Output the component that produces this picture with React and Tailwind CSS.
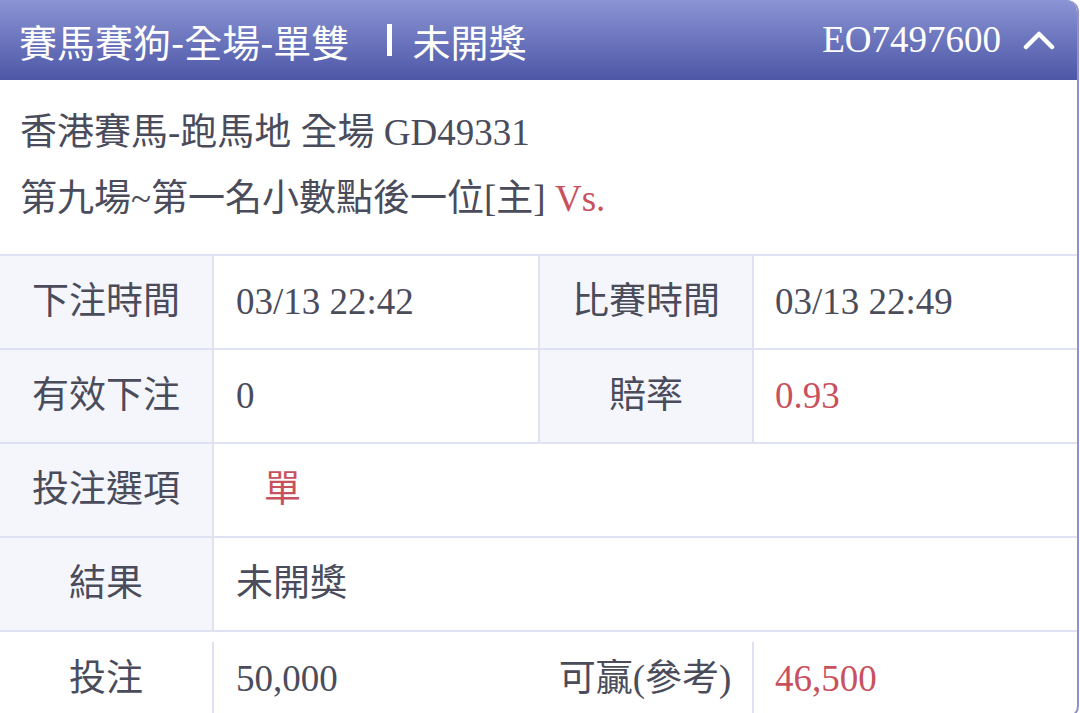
import React from "react";

const FONT = "font-['Liberation_Serif','Noto_Sans_CJK_TC',serif]";

const Row = ({ children, last }) => (
    <div className={`grid grid-cols-[212px_326px_214px_1fr] border-t-2 border-[#dfe2f3] ${last ? "h-[86px]" : "h-[94px]"}`}>
        {children}
    </div>
);

const Label = ({ children }) => (
    <div className="bg-[#f5f6fb] flex items-center justify-center">{children}</div>
);

const App = () => {
    return (
        <div className={`w-[1080px] h-[713px] overflow-hidden bg-white text-[37px] text-[#4a4c5b] ${FONT}`}>
            <div className="w-[1079px] border-r-2 border-b-2 border-[#8e92c9] rounded-tr-[12px] rounded-br-[12px] overflow-hidden">
                {/* header */}
                <div className="h-[80px] bg-gradient-to-b from-[#8b94d4] to-[#4e57a6] flex items-center pl-[19px] pr-[22px] text-white">
                    <span className="text-[38px] font-['Noto_Sans_CJK_TC',sans-serif]">賽馬賽狗-全場-單雙</span>
                    <span className="ml-[38px] w-[5px] h-[32px] bg-white" />
                    <span className="ml-[20px] text-[38px] font-['Noto_Sans_CJK_TC',sans-serif]">未開獎</span>
                    <span className="ml-auto">EO7497600</span>
                    <svg className="ml-[22px]" width="32" height="22" viewBox="0 0 32 22" fill="none">
                        <polyline points="3,18 16,5 29,18" stroke="white" strokeWidth="4.5" strokeLinecap="round" strokeLinejoin="round" />
                    </svg>
                </div>

                {/* match info */}
                <div className="pl-[20px] pt-[20px] pb-[22px] leading-[66px]">
                    <div>香港賽馬-跑馬地 全場 GD49331</div>
                    <div>第九場~第一名小數點後一位[主] <span className="text-[#c8515e]">Vs.</span></div>
                </div>

                {/* details table */}
                <Row>
                    <Label>下注時間</Label>
                    <div className="border-l-2 border-[#dfe2f3] flex items-center pl-[22px]">03/13 22:42</div>
                    <div className="border-l-2 border-[#dfe2f3] bg-[#f5f6fb] flex items-center justify-center">比賽時間</div>
                    <div className="border-l-2 border-[#dfe2f3] flex items-center pl-[21px]">03/13 22:49</div>
                </Row>
                <Row>
                    <Label>有效下注</Label>
                    <div className="border-l-2 border-[#dfe2f3] flex items-center pl-[22px]">0</div>
                    <div className="border-l-2 border-[#dfe2f3] bg-[#f5f6fb] flex items-center justify-center">賠率</div>
                    <div className="border-l-2 border-[#dfe2f3] flex items-center pl-[21px] text-[#c8515e]">0.93</div>
                </Row>
                <Row>
                    <Label>投注選項</Label>
                    <div className="col-span-3 border-l-2 border-[#dfe2f3] flex items-center pl-[50px] text-[#c8515e]">單</div>
                </Row>
                <Row>
                    <Label>結果</Label>
                    <div className="col-span-3 border-l-2 border-[#dfe2f3] flex items-center pl-[22px]">未開獎</div>
                </Row>
                <Row last>
                    <div className="flex items-center justify-center pt-[10px]">投注</div>
                    <div className="border-l-2 border-[#dfe2f3] mt-[10px] flex items-center pl-[22px]">50,000</div>
                    <div className="flex items-center justify-center pt-[10px]">可贏(參考)</div>
                    <div className="border-l-2 border-[#dfe2f3] mt-[10px] flex items-center pl-[21px] text-[#c8515e]">46,500</div>
                </Row>
            </div>
        </div>
    );
};

export default App;
